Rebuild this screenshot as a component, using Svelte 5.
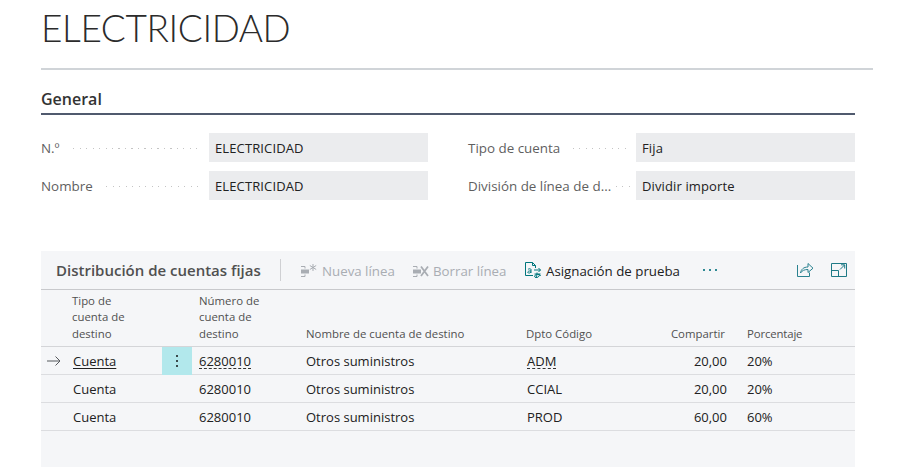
<script>
  const rows = [
    { tipo: 'Cuenta', num: '6280010', nombre: 'Otros suministros', dpto: 'ADM', comp: '20,00', pct: '20%', active: true },
    { tipo: 'Cuenta', num: '6280010', nombre: 'Otros suministros', dpto: 'CCIAL', comp: '20,00', pct: '20%' },
    { tipo: 'Cuenta', num: '6280010', nombre: 'Otros suministros', dpto: 'PROD', comp: '60,00', pct: '60%' }
  ];
</script>

<div class="page">
  <h1 class="title">ELECTRICIDAD</h1>
  <div class="rule"></div>
  <div class="content">
    <h2 class="section">General</h2>
    <div class="fields">
      <div class="field">
        <span class="label">N.º</span><span class="dots"></span>
        <div class="value">ELECTRICIDAD</div>
      </div>
      <div class="field">
        <span class="label">Tipo de cuenta</span><span class="dots"></span>
        <div class="value">Fija</div>
      </div>
      <div class="field">
        <span class="label">Nombre</span><span class="dots"></span>
        <div class="value">ELECTRICIDAD</div>
      </div>
      <div class="field">
        <span class="label trunc">División de línea de d...</span><span class="dots"></span>
        <div class="value">Dividir importe</div>
      </div>
    </div>

    <section class="panel">
      <div class="toolbar">
        <span class="panel-title">Distribución de cuentas fijas</span>
        <span class="sep"></span>
        <span class="action off">
          <svg width="18" height="16" viewBox="0 0 18 16" fill="none" stroke="#a9adb3" stroke-width="1">
            <path d="M1 3.500h4v2M1 13.500h4v-2" />
            <rect x="1" y="6.500" width="8" height="4" fill="#a9adb3" stroke="none" />
            <path d="M13 1v7M9.800 2.500l6.400 4M16.200 2.500l-6.400 4" />
          </svg>
          Nueva línea
        </span>
        <span class="action off second">
          <svg width="18" height="16" viewBox="0 0 18 16" fill="none" stroke="#a9adb3" stroke-width="1">
            <path d="M1 3.500h4v2M1 13.500h4v-2" />
            <rect x="1" y="6.500" width="8" height="4" fill="#a9adb3" stroke="none" />
            <path d="M9 3.500l7 9.500M16 3.500l-7 9.500" stroke-width="1.800" />
          </svg>
          Borrar línea
        </span>
        <span class="action on">
          <svg width="18" height="17" viewBox="0 0 18 17" fill="none" stroke="#00767c" stroke-width="1">
            <path d="M8 13.500H.5V.5h7l3 3v2.500" />
            <path d="M7.500 .5v3h3" />
            <path d="M3 7.500c.5-1 3-1 3 0v3.500M6 9c-4-.5-4 2.500-1.500 2L6 10" />
            <path d="M9 8h6.500M13.500 6l2 2-2 2" />
            <path d="M9.500 12h6M12 10.500c0 2.500-.5 4.500-1.500 5.500M14.500 12.500c0 2-2 3.500-4 3-1.500-.5-1-2.500 1-3 1.500-.3 4 0 4 1.500" />
          </svg>
          Asignación de prueba
        </span>
        <span class="more" aria-label="Más">
          <i></i><i></i><i></i>
        </span>
        <span class="spacer"></span>
        <svg class="ticon share" width="17" height="15" viewBox="0 0 17 15" fill="none" stroke="#2a8290" stroke-width="1">
          <path d="M.5 3v11.500h12V10.500" />
          <path d="M3.500 11c.5-3.500 3-6 7.500-6V1.500l5 4.700-5 4.300V7.500c-3.500 0-6 1-7.500 3.500z" />
        </svg>
        <svg class="ticon" width="16" height="14" viewBox="0 0 16 14" fill="none" stroke="#1e7a86" stroke-width="1">
          <path d="M.5 13.500V.5h15v13zM.5 7.500h7v6" />
          <path d="M9 6.500l4.500-4.500M10 1.800h3.700v3.700" />
        </svg>
      </div>

      <div class="grid head">
        <div></div>
        <div class="th tipo">Tipo de cuenta de destino</div>
        <div></div>
        <div class="th num">Número de cuenta de destino</div>
        <div class="th name">Nombre de cuenta de destino</div>
        <div class="th">Dpto Código</div>
        <div class="th right">Compartir</div>
        <div class="th pct">Porcentaje</div>
      </div>

      {#each rows as r}
        <div class="grid row">
          <div class="arrow">
            {#if r.active}
              <svg width="14" height="10" viewBox="0 0 14 10" fill="none" stroke="#55585c" stroke-width="1">
                <path d="M0 5h13M8.500 .5L13 5l-4.500 4.500" />
              </svg>
            {/if}
          </div>
          <div class="td"><span class:link={r.active}>{r.tipo}</span></div>
          <div class="menu" class:shown={r.active}>
            {#if r.active}<b></b><b></b><b></b>{/if}
          </div>
          <div class="td"><span class:dash={r.active}>{r.num}</span></div>
          <div class="td">{r.nombre}</div>
          <div class="td"><span class:dash={r.active}>{r.dpto}</span></div>
          <div class="td right">{r.comp}</div>
          <div class="td">{r.pct}</div>
        </div>
      {/each}
    </section>
  </div>
</div>

<style>
  :global(body) {
    margin: 0;
    background: #fff;
    overflow: hidden;
  }
  .page {
    width: 907px;
    height: 467px;
    overflow: hidden;
    box-sizing: border-box;
    padding: 0 34px 0 41px;
    font-family: "Open Sans", "Noto Sans", sans-serif;
    font-size: 13px;
    color: #212121;
  }
  .title {
    margin: 0;
    height: 68px;
    box-sizing: border-box;
    padding-top: 3px;
    font-family: "Lato", "Open Sans", sans-serif;
    font-size: 37px;
    line-height: 50px;
    font-weight: 300;
    letter-spacing: -0.4px;
    color: #2b2b2b;
  }
  .rule {
    height: 2px;
    background: #d0d4d8;
  }
  .content {
    width: 814px;
  }
  .section {
    margin: 0;
    height: 45px;
    box-sizing: border-box;
    padding-top: 18px;
    font-size: 16px;
    line-height: 22px;
    font-weight: 600;
    color: #333;
    border-bottom: 2px solid #505a6e;
  }
  .fields {
    display: grid;
    grid-template-columns: 387px 387px;
    column-gap: 40px;
    row-gap: 9px;
    padding-top: 18px;
  }
  .field {
    display: flex;
    align-items: center;
    height: 29px;
  }
  .label {
    flex: none;
    color: #5f5f5f;
    white-space: nowrap;
    font-size: 13.4px;
  }
  .dots {
    flex: 1;
    min-width: 0;
    height: 1px;
    margin: 2px 6px 0 13px;
    background: repeating-linear-gradient(to right, #c4c4c4 0 1px, transparent 1px 6.5px);
  }
  .trunc + .dots {
    margin-left: 5px;
  }
  .value {
    flex: 0 0 219px;
    box-sizing: border-box;
    height: 29px;
    line-height: 30px;
    padding-left: 6px;
    background: #ebecee;
    letter-spacing: 0.12px;
  }
  .panel {
    margin-top: 51px;
    height: 216px;
    background: #f5f6f8;
  }
  .toolbar {
    display: flex;
    align-items: center;
    height: 38px;
    padding-left: 15px;
    border-bottom: 1px solid #c8c9cc;
  }
  .panel-title {
    font-size: 15px;
    font-weight: 600;
    color: #505050;
    width: 205px;
    white-space: nowrap;
  }
  .sep {
    width: 1px;
    height: 22px;
    background: #cfd0d3;
    margin: 0 18px 0 19px;
  }
  .action {
    display: flex;
    align-items: center;
    gap: 3px;
    font-size: 13.3px;
    padding-top: 1px;
    white-space: nowrap;
  }
  .action svg {
    flex: none;
  }
  .action.off {
    color: #a9adb3;
    width: 112px;
    gap: 4px;
  }
  .action.off svg {
    margin-left: 1px;
  }
  .action.second {
    width: 114px;
    gap: 3px;
  }
  .action.on {
    color: #212121;
  }
  .more {
    display: flex;
    gap: 4px;
    margin-left: 23px;
  }
  .more i {
    width: 2px;
    height: 2px;
    background: #2f8a94;
    display: block;
  }
  .spacer {
    flex: 1;
  }
  .ticon {
    margin-right: 8px;
    flex: none;
  }
  .ticon.share {
    margin-right: 17px;
    margin-top: -2px;
  }
  .grid {
    display: grid;
    grid-template-columns: 31px 90px 30px 113px 221px 110px 91px 128px;
  }
  .head {
    height: 57px;
    border-bottom: 1px solid #d4d5d8;
    box-sizing: border-box;
    align-items: end;
  }
  .th {
    font-size: 11.4px;
    line-height: 16.4px;
    color: #505050;
    padding: 0 6px 4px 0;
  }
  .th.tipo {
    padding-right: 22px;
  }
  .th.num {
    padding-left: 7px;
    padding-right: 22px;
  }
  .th.name {
    padding-left: 1px;
  }
  .th.right {
    text-align: right;
    padding-right: 2px;
  }
  .th.pct {
    padding-left: 20px;
    letter-spacing: -0.15px;
  }
  .row {
    height: 28px;
    box-sizing: border-box;
    border-bottom: 1px solid #dcdde0;
  }
  .arrow {
    display: flex;
    align-items: center;
    padding-left: 6px;
  }
  .td {
    line-height: 28px;
    white-space: nowrap;
    padding-left: 1px;
  }
  .td:nth-child(4) {
    padding-left: 7px;
  }
  .td:last-child {
    padding-left: 20px;
  }
  .td.right {
    text-align: right;
    padding-left: 0;
  }
  .link {
    text-decoration: underline;
    text-underline-offset: 2px;
  }
  .dash {
    text-decoration: underline dashed #333;
    text-underline-offset: 2px;
    text-decoration-thickness: 1px;
  }
  .menu {
    display: flex;
    flex-direction: column;
    align-items: center;
    justify-content: center;
    gap: 3px;
  }
  .menu.shown {
    background: #b2e8ec;
  }
  .menu b {
    display: block;
    width: 2px;
    height: 2px;
    background: #3b4a4c;
  }
</style>
